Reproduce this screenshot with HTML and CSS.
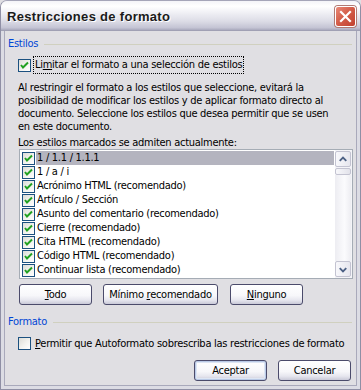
FILE: index.html
```html
<!DOCTYPE html>
<html lang="es">
<head>
<meta charset="utf-8">
<title>Restricciones de formato</title>
<link rel="stylesheet" href="styles.css">
</head>
<body>
<div class="window">
  <div class="titlebar">
    <span class="title">Restricciones de formato</span>
    <span class="close">
      <svg width="21" height="21" viewBox="0 0 21 21">
        <path d="M6 6 L15 15 M15 6 L6 15" stroke="#ffffff" stroke-width="2.2" stroke-linecap="square" fill="none"/>
      </svg>
    </span>
  </div>
  <div class="client">
    <div class="group-label"><span class="group-text">Estilos</span><span class="rule"></span></div>
    <div class="check-row">
      <span class="cb checked"><svg width="11" height="11" viewBox="0 0 11 11"><path d="M2 5 L4 7.5 L9 2.5" stroke="#21a121" stroke-width="2" fill="none"/></svg></span>
      <span class="focus-text">Li<u>m</u>itar el formato a una selección de estilos</span>
    </div>
    <p class="para">Al restringir el formato a los estilos que seleccione, evitará la posibilidad de modificar los estilos y de aplicar formato directo al documento. Seleccione los estilos que desea permitir que se usen en este documento.</p>
    <div class="list-label">Los estilos marcados se admiten actualmente:</div>
    <div class="listbox">
      <div class="items">
        <div class="item selected"><span class="cb checked"><svg width="11" height="11" viewBox="0 0 11 11"><path d="M2 5 L4 7.5 L9 2.5" stroke="#21a121" stroke-width="2" fill="none"/></svg></span><span class="item-text">1 / 1.1 / 1.1.1</span></div>
        <div class="item"><span class="cb checked"><svg width="11" height="11" viewBox="0 0 11 11"><path d="M2 5 L4 7.5 L9 2.5" stroke="#21a121" stroke-width="2" fill="none"/></svg></span><span class="item-text">1 / a / i</span></div>
        <div class="item"><span class="cb checked"><svg width="11" height="11" viewBox="0 0 11 11"><path d="M2 5 L4 7.5 L9 2.5" stroke="#21a121" stroke-width="2" fill="none"/></svg></span><span class="item-text">Acrónimo HTML (recomendado)</span></div>
        <div class="item"><span class="cb checked"><svg width="11" height="11" viewBox="0 0 11 11"><path d="M2 5 L4 7.5 L9 2.5" stroke="#21a121" stroke-width="2" fill="none"/></svg></span><span class="item-text">Artículo / Sección</span></div>
        <div class="item"><span class="cb checked"><svg width="11" height="11" viewBox="0 0 11 11"><path d="M2 5 L4 7.5 L9 2.5" stroke="#21a121" stroke-width="2" fill="none"/></svg></span><span class="item-text">Asunto del comentario (recomendado)</span></div>
        <div class="item"><span class="cb checked"><svg width="11" height="11" viewBox="0 0 11 11"><path d="M2 5 L4 7.5 L9 2.5" stroke="#21a121" stroke-width="2" fill="none"/></svg></span><span class="item-text">Cierre (recomendado)</span></div>
        <div class="item"><span class="cb checked"><svg width="11" height="11" viewBox="0 0 11 11"><path d="M2 5 L4 7.5 L9 2.5" stroke="#21a121" stroke-width="2" fill="none"/></svg></span><span class="item-text">Cita HTML (recomendado)</span></div>
        <div class="item"><span class="cb checked"><svg width="11" height="11" viewBox="0 0 11 11"><path d="M2 5 L4 7.5 L9 2.5" stroke="#21a121" stroke-width="2" fill="none"/></svg></span><span class="item-text">Código HTML (recomendado)</span></div>
        <div class="item"><span class="cb checked"><svg width="11" height="11" viewBox="0 0 11 11"><path d="M2 5 L4 7.5 L9 2.5" stroke="#21a121" stroke-width="2" fill="none"/></svg></span><span class="item-text">Continuar lista (recomendado)</span></div>
      </div>
      <div class="scrollbar">
        <div class="sb-btn"><svg width="15" height="15" viewBox="0 0 15 15"><path d="M4 9 L7.5 5.5 L11 9" stroke="#4d6185" stroke-width="2" fill="none"/></svg></div>
        <div class="sb-thumb"></div>
        <div class="sb-track"></div>
        <div class="sb-btn"><svg width="15" height="15" viewBox="0 0 15 15"><path d="M4 6 L7.5 9.5 L11 6" stroke="#4d6185" stroke-width="2" fill="none"/></svg></div>
      </div>
    </div>
    <div class="btn-row">
      <button class="btn w73"><u>T</u>odo</button>
      <button class="btn w115">Mínimo <u>r</u>ecomendado</button>
      <button class="btn w73"><u>N</u>inguno</button>
    </div>
    <div class="group-label second"><span class="group-text">Formato</span><span class="rule"></span></div>
    <div class="check-row">
      <span class="cb"></span>
      <span class="plain-text"><u>P</u>ermitir que Autoformato sobrescriba las restricciones de formato</span>
    </div>
    <div class="footer">
      <button class="btn w73 default">Aceptar</button>
      <button class="btn w73">Cancelar</button>
    </div>
  </div>
</div>
</body>
</html>
```
FILE: styles.css
```css
html, body {
  margin: 0;
  padding: 0;
  background: #e0dfe3;
}
body {
  width: 361px;
  height: 390px;
  overflow: hidden;
  font-family: "DejaVu Sans Condensed", "DejaVu Sans", sans-serif;
  font-stretch: condensed;
  font-size: 11px;
  line-height: 13px;
  letter-spacing: -0.27px;
  color: #000;
}
.window {
  width: 361px;
  height: 390px;
  box-sizing: border-box;
  display: flex;
  flex-direction: column;
  border: 1px solid #8f8fa5;
  border-top-color: #a5a5b8;
  border-radius: 7px 7px 0 0;
  background: #e0dfe3;
  overflow: hidden;
}
.titlebar {
  height: 29px;
  flex: 0 0 29px;
  display: flex;
  align-items: center;
  justify-content: space-between;
  padding: 0 4px 0 6px;
  background: linear-gradient(#f4f4f8 0%, #ffffff 18%, #f0f0f5 40%, #dcdce6 70%, #c4c4d4 92%, #a9a9bd 100%);
  border-bottom: 1px solid #a0a0b4;
}
.title {
  font-family: "Liberation Sans", "DejaVu Sans", sans-serif;
  font-stretch: normal;
  letter-spacing: 0.3px;
  font-weight: bold;
  font-size: 13px;
  color: #1a1a1a;
  padding-top: 2px;
  text-shadow: 1px 1px 0 #ffffff;
}
.close {
  width: 21px;
  height: 21px;
  box-sizing: border-box;
  border: 1px solid #ffffff;
  border-radius: 3px;
  background: linear-gradient(135deg, #e98a78 0%, #d45e4a 45%, #c1412f 100%);
  box-shadow: 0 0 0 1px #b07a74;
  display: flex;
  align-items: center;
  justify-content: center;
  margin-top: 1px;
}
.close svg { margin: -1px; }
.client {
  flex: 1;
  display: flex;
  flex-direction: column;
  padding: 6px 5px 0 4px;
  border-left: 3px solid #dcdce4;
  border-right: 3px solid #dcdce4;
  border-bottom: 3px solid #dcdce4;
  box-shadow: inset 1px 0 0 #a9a9bb, inset -1px 0 0 #a9a9bb, inset 0 -1px 0 #a9a9bb;
}
.group-label {
  display: flex;
  align-items: center;
  gap: 6px;
  height: 13px;
}
.group-text { color: #0046d5; }
.rule {
  flex: 1;
  height: 1px;
  background: #d0d0bf;
  margin-top: 1px;
}
.group-label.second { margin-top: 10px; }
.check-row {
  display: flex;
  align-items: center;
  margin: 7px 0 0 10px;
  height: 16px;
}
.cb {
  width: 13px;
  height: 13px;
  box-sizing: border-box;
  border: 1px solid #1c5180;
  background: linear-gradient(135deg, #dcdcd7 0%, #f3f3ef 55%, #ffffff 100%);
  display: flex;
  align-items: center;
  justify-content: center;
  flex: 0 0 13px;
}
.focus-text {
  margin-left: 2px;
  padding: 1px 1px 2px 1px;
  border: 1px dotted #000;
}
.plain-text { margin-left: 4px; white-space: nowrap; }
.para {
  margin: 8px 0 0 10px;
  padding-right: 12px;
}
.list-label {
  margin: 3px 0 0 10px;
}
.listbox {
  margin: 0 0 0 11px;
  width: 334px;
  height: 130px;
  box-sizing: border-box;
  border: 1px solid #a5acb5;
  background: #ffffff;
  display: flex;
}
.items {
  flex: 1;
  padding: 1px 1px 0 2px;
  overflow: hidden;
}
.item {
  display: flex;
  align-items: center;
  height: 14px;
}
.item-text {
  margin-left: 1px;
  padding: 0 1px;
  height: 14px;
  line-height: 14px;
}
.item.selected .item-text {
  flex: 1;
  background: #b4b4bf;
}
.scrollbar {
  width: 17px;
  display: flex;
  flex-direction: column;
  padding: 1px 1px 1px 0;
  box-sizing: border-box;
  background: #f4f4f8;
}
.sb-btn {
  height: 16px;
  box-sizing: border-box;
  border: 1px solid #c3c3d1;
  border-radius: 2px;
  background: linear-gradient(90deg, #f8f8fb, #e6e6ee);
  display: flex;
  align-items: center;
  justify-content: center;
}
.sb-thumb {
  height: 7px;
  box-sizing: border-box;
  border: 1px solid #c3c3d1;
  border-radius: 2px;
  background: linear-gradient(90deg, #f8f8fb, #e2e2ea);
  margin-top: 1px;
}
.sb-track {
  flex: 1;
  background: linear-gradient(90deg, #ededf2, #fbfbfd 60%, #ededf2);
}
.btn {
  font-family: inherit;
  font-stretch: condensed;
  letter-spacing: -0.27px;
  font-size: 11px;
  line-height: 13px;
  color: #000;
  height: 21px;
  box-sizing: border-box;
  padding: 0;
  border: 1px solid #4b4b6b;
  border-radius: 3px;
  background: linear-gradient(#ffffff 0%, #f7f7fa 55%, #e6e6ee 80%, #c9c9d8 100%);
}
.w73 { width: 73px; }
.w115 { width: 115px; }
.btn.default {
  box-shadow: inset 0 0 0 1px #b9c9e6, inset 0 0 0 2px #dde5f3;
}
.btn-row {
  display: flex;
  gap: 11px;
  margin: 5px 0 0 11px;
}
.btn-row .btn:last-child { margin-left: 1px; }
.footer {
  display: flex;
  justify-content: flex-end;
  gap: 11px;
  margin-top: 9px;
  padding-right: 1px;
}
```
